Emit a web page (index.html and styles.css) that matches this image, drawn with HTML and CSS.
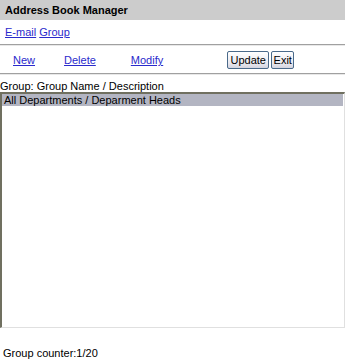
FILE: index.html
```html
<!DOCTYPE html>
<html>
<head>
<meta charset="utf-8">
<link rel="stylesheet" href="styles.css">
</head>
<body>
<div class="title">Address Book Manager</div>
<div class="tabs"><a href="#">E-mail</a> <a href="#">Group</a></div>
<div class="rule"></div>
<div class="toolbar">
  <a href="#" class="act act-new">New</a>
  <a href="#" class="act act-del">Delete</a>
  <a href="#" class="act act-mod">Modify</a>
  <div class="buttons">
    <button class="btn btn-upd">Update</button><button class="btn btn-exit">Exit</button>
  </div>
</div>
<div class="rule"></div>
<div class="caption">Group: Group Name / Description</div>
<div class="listbox">
  <div class="item selected">All Departments / Deparment Heads</div>
</div>
<div class="counter">Group counter:1/20</div>
</body>
</html>
```
FILE: styles.css
```css
html, body {
  margin: 0;
  padding: 0;
  background: #fff;
  width: 346px;
  height: 361px;
  overflow: hidden;
}
body {
  font-family: "Liberation Sans", Arial, sans-serif;
  font-size: 11px;
  color: #000;
}
.title {
  background: #cccccc;
  height: 20px;
  line-height: 20px;
  padding-left: 5px;
  font-weight: bold;
  font-size: 11px;
  margin-right: 1px;
}
.tabs {
  height: 24px;
  line-height: 24px;
  padding-left: 5px;
}
.tabs a, .act {
  color: #2a2acc;
  text-decoration: underline;
}
.rule {
  height: 1px;
  border-top: 1px solid #a0a0a0;
  background: #e8e8e8;
  margin-right: 1px;
}
.toolbar {
  height: 27px;
  display: flex;
  align-items: center;
}
.act { line-height: 14px; margin-top: 1px; }
.act-new { margin-left: 13px; }
.act-del { margin-left: 29px; }
.act-mod { margin-left: 35px; }
.buttons {
  margin-left: 64px;
  display: flex;
  gap: 2px;
}
.btn {
  font-family: "Liberation Sans", Arial, sans-serif;
  font-size: 11px;
  height: 18px;
  padding: 0;
  border: 1px solid #4a6a8a;
  border-radius: 2px;
  background: linear-gradient(#ffffff, #e8e8ef 70%, #d4d4df);
  color: #000;
}
.btn-upd { width: 42px; }
.btn-exit { width: 23px; }
.caption {
  margin-top: 5px;
  height: 12px;
  line-height: 12px;
}
.listbox {
  height: 233px;
  margin-right: 1px;
  border-top: 2px solid #707060;
  border-left: 2px solid #707060;
  border-right: 1px solid #e0e0e0;
  border-bottom: 1px solid #e0e0e0;
  padding: 0 1px 0 0;
}
.item {
  height: 12px;
  line-height: 12px;
  padding-left: 2px;
  white-space: nowrap;
}
.selected {
  background: #b3b5c2;
}
.counter {
  margin-top: 19px;
  height: 12px;
  line-height: 12px;
  padding-left: 3px;
}
```
